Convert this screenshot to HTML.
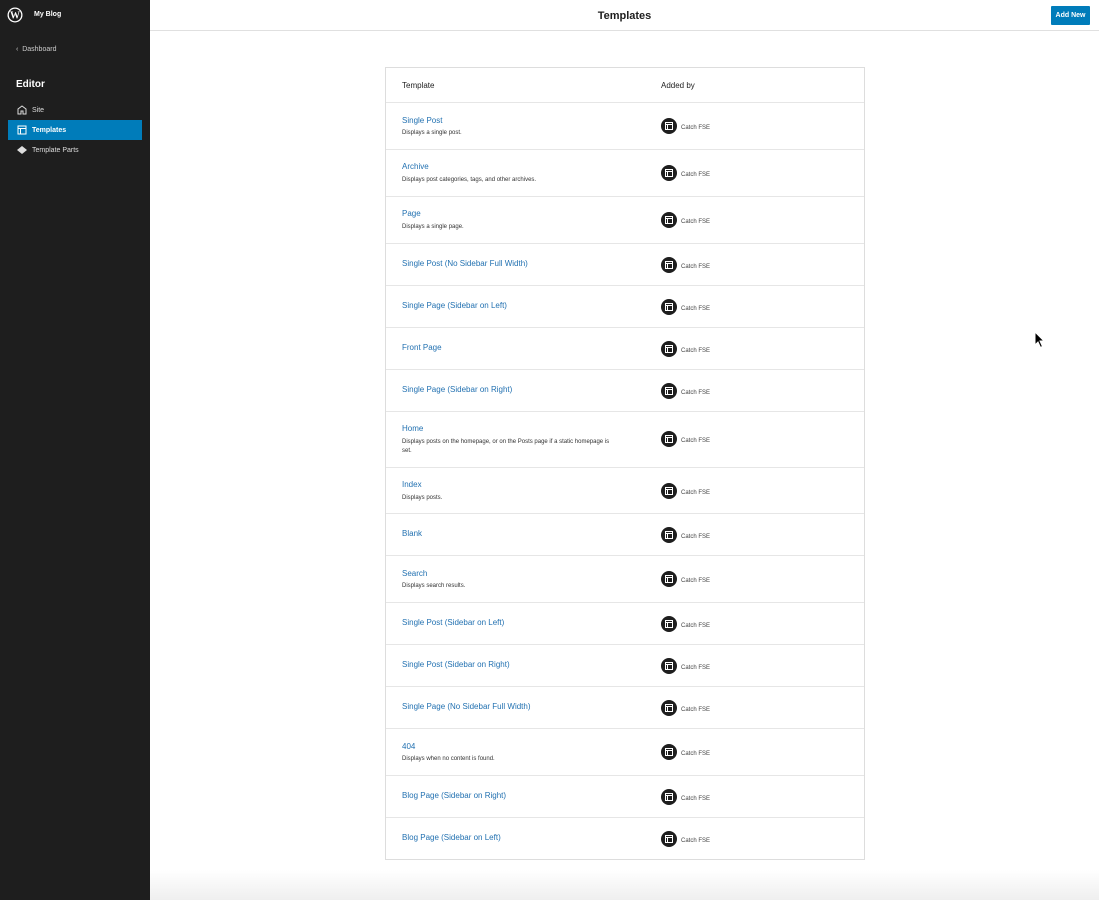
<!DOCTYPE html>
<html><head><style>
*{box-sizing:border-box;margin:0;padding:0}
body{width:1099px;height:900px;overflow:hidden;font-family:"Liberation Sans",sans-serif;background:#fff;position:relative}
.sb{position:absolute;left:0;top:0;width:150px;height:900px;background:#1e1e1e;color:#fff}
.top{position:absolute;left:150px;top:0;right:0;height:31px;border-bottom:1px solid #e0e0e0;background:#fff}
.top h1{position:absolute;left:0;right:0;top:10px;text-align:center;font-size:11px;font-weight:bold;color:#1e1e1e}
.btn{position:absolute;right:9px;top:6px;width:39px;height:19px;background:#007cba;color:#fff;font-size:7px;font-weight:bold;text-align:center;line-height:19px;border-radius:1px}
.tbl{position:absolute;left:385px;top:67px;width:480px;height:793px;border:1px solid #ddd}
.row{position:relative;border-bottom:1px solid #e6e6e6}
.row:last-child{border-bottom:none}
.t{position:absolute;left:16px;font-size:8px;color:#2271b1}
.d{position:absolute;left:16px;font-size:6px;color:#333;width:215px;line-height:9px;margin-top:2px}
.av{position:absolute;left:275px;width:16px;height:16px;border-radius:50%;background:#1e1e1e}
.av svg{position:absolute;left:4px;top:4px}
.c{position:absolute;left:295px;font-size:6px;color:#444;margin-top:2px}
.hl{position:absolute;left:16px;font-size:8px;color:#1e1e1e}
.nav{position:absolute;left:32px;font-size:7px;color:#ddd}
</style></head><body>
<div class="sb">
<svg style="position:absolute;left:7px;top:7px" width="16" height="16" viewBox="0 0 16 16"><circle cx="8" cy="8" r="7.5" fill="#fff"/><circle cx="8" cy="8" r="6.2" fill="#1e1e1e"/><text x="8" y="11.5" font-size="10" font-weight="bold" text-anchor="middle" fill="#fff" font-family="Liberation Serif">W</text></svg>
<div style="position:absolute;left:34px;top:11px;font-size:7px;font-weight:bold">My Blog</div>
<div style="position:absolute;left:16px;top:46px;font-size:7px;color:#ccc">‹&nbsp; Dashboard</div>
<div style="position:absolute;left:16px;top:79px;font-size:10px;font-weight:bold">Editor</div>
<svg style="position:absolute;left:17px;top:105px" width="10" height="10" viewBox="0 0 10 10"><path d="M1 9V4L5 1 9 4V9H6V6H4V9Z" fill="none" stroke="#ddd" stroke-width="1"/></svg>
<div class="nav" style="top:107px">Site</div>
<div style="position:absolute;left:8px;top:120px;width:134px;height:20px;background:#007cba"></div>
<svg style="position:absolute;left:17px;top:125px" width="10" height="10" viewBox="0 0 10 10"><rect x="1" y="1" width="8" height="8" fill="none" stroke="#fff"/><path d="M1 3.5H9M3.5 3.5V9" stroke="#fff"/></svg>
<div class="nav" style="top:127px;color:#fff;font-weight:bold">Templates</div>
<svg style="position:absolute;left:16px;top:145px" width="12" height="10" viewBox="0 0 12 10"><path d="M1 5L6 1 11 5 6 9Z" fill="#ddd"/></svg>
<div class="nav" style="top:147px">Template Parts</div>
</div>
<div class="top"><h1>Templates</h1><div class="btn">Add New</div></div>
<div style="position:absolute;left:150px;top:870px;right:0;height:30px;background:linear-gradient(#fff,#efefef)"></div>
<div class="tbl">
<div class="row" style="height:35px"><div class="hl" style="top:13px">Template</div><div class="hl" style="left:275px;top:13px">Added by</div></div>
<div class="row" style="height:47px"><div class="t" style="top:13px">Single Post</div><div class="d" style="top:24px">Displays a single post.</div><div class="av" style="top:15px"></div><div class="c" style="top:20px">Catch FSE</div></div>
<div class="row" style="height:47px"><div class="t" style="top:12px">Archive</div><div class="d" style="top:24px">Displays post categories, tags, and other archives.</div><div class="av" style="top:15px"></div><div class="c" style="top:20px">Catch FSE</div></div>
<div class="row" style="height:47px"><div class="t" style="top:12px">Page</div><div class="d" style="top:24px">Displays a single page.</div><div class="av" style="top:15px"></div><div class="c" style="top:20px">Catch FSE</div></div>
<div class="row" style="height:42px"><div class="t" style="top:15px">Single Post (No Sidebar Full Width)</div><div class="av" style="top:13px"></div><div class="c" style="top:18px">Catch FSE</div></div>
<div class="row" style="height:42px"><div class="t" style="top:15px">Single Page (Sidebar on Left)</div><div class="av" style="top:13px"></div><div class="c" style="top:18px">Catch FSE</div></div>
<div class="row" style="height:42px"><div class="t" style="top:15px">Front Page</div><div class="av" style="top:13px"></div><div class="c" style="top:18px">Catch FSE</div></div>
<div class="row" style="height:42px"><div class="t" style="top:15px">Single Page (Sidebar on Right)</div><div class="av" style="top:13px"></div><div class="c" style="top:18px">Catch FSE</div></div>
<div class="row" style="height:56px"><div class="t" style="top:12px">Home</div><div class="d" style="top:24px">Displays posts on the homepage, or on the Posts page if a static homepage is set.</div><div class="av" style="top:19px"></div><div class="c" style="top:24px">Catch FSE</div></div>
<div class="row" style="height:46px"><div class="t" style="top:12px">Index</div><div class="d" style="top:24px">Displays posts.</div><div class="av" style="top:15px"></div><div class="c" style="top:20px">Catch FSE</div></div>
<div class="row" style="height:42px"><div class="t" style="top:15px">Blank</div><div class="av" style="top:13px"></div><div class="c" style="top:18px">Catch FSE</div></div>
<div class="row" style="height:47px"><div class="t" style="top:13px">Search</div><div class="d" style="top:24px">Displays search results.</div><div class="av" style="top:15px"></div><div class="c" style="top:20px">Catch FSE</div></div>
<div class="row" style="height:42px"><div class="t" style="top:15px">Single Post (Sidebar on Left)</div><div class="av" style="top:13px"></div><div class="c" style="top:18px">Catch FSE</div></div>
<div class="row" style="height:42px"><div class="t" style="top:15px">Single Post (Sidebar on Right)</div><div class="av" style="top:13px"></div><div class="c" style="top:18px">Catch FSE</div></div>
<div class="row" style="height:42px"><div class="t" style="top:15px">Single Page (No Sidebar Full Width)</div><div class="av" style="top:13px"></div><div class="c" style="top:18px">Catch FSE</div></div>
<div class="row" style="height:47px"><div class="t" style="top:13px">404</div><div class="d" style="top:24px">Displays when no content is found.</div><div class="av" style="top:15px"></div><div class="c" style="top:20px">Catch FSE</div></div>
<div class="row" style="height:42px"><div class="t" style="top:15px">Blog Page (Sidebar on Right)</div><div class="av" style="top:13px"></div><div class="c" style="top:18px">Catch FSE</div></div>
<div class="row" style="height:42px"><div class="t" style="top:15px">Blog Page (Sidebar on Left)</div><div class="av" style="top:13px"></div><div class="c" style="top:18px">Catch FSE</div></div>
</div>
<svg width="0" height="0" style="position:absolute"><defs><symbol id="ic" viewBox="0 0 8 8"><rect x="0.5" y="0.5" width="7" height="7" fill="none" stroke="#fff" stroke-width="1"/><path d="M0.5 2.5H7.5M2.5 2.5V7.5" stroke="#fff" stroke-width="1"/></symbol></defs></svg>
<script>document.querySelectorAll('.av').forEach(function(a){a.innerHTML='<svg width="8" height="8"><use href="#ic"/></svg>';});</script>
<svg style="position:absolute;left:1034px;top:331px" width="12" height="18" viewBox="0 0 12 18"><path d="M1 1V14L4 11 6.5 16.5 8.5 15.5 6 10H10Z" fill="#000" stroke="#fff" stroke-width="1"/></svg>
</body></html>
